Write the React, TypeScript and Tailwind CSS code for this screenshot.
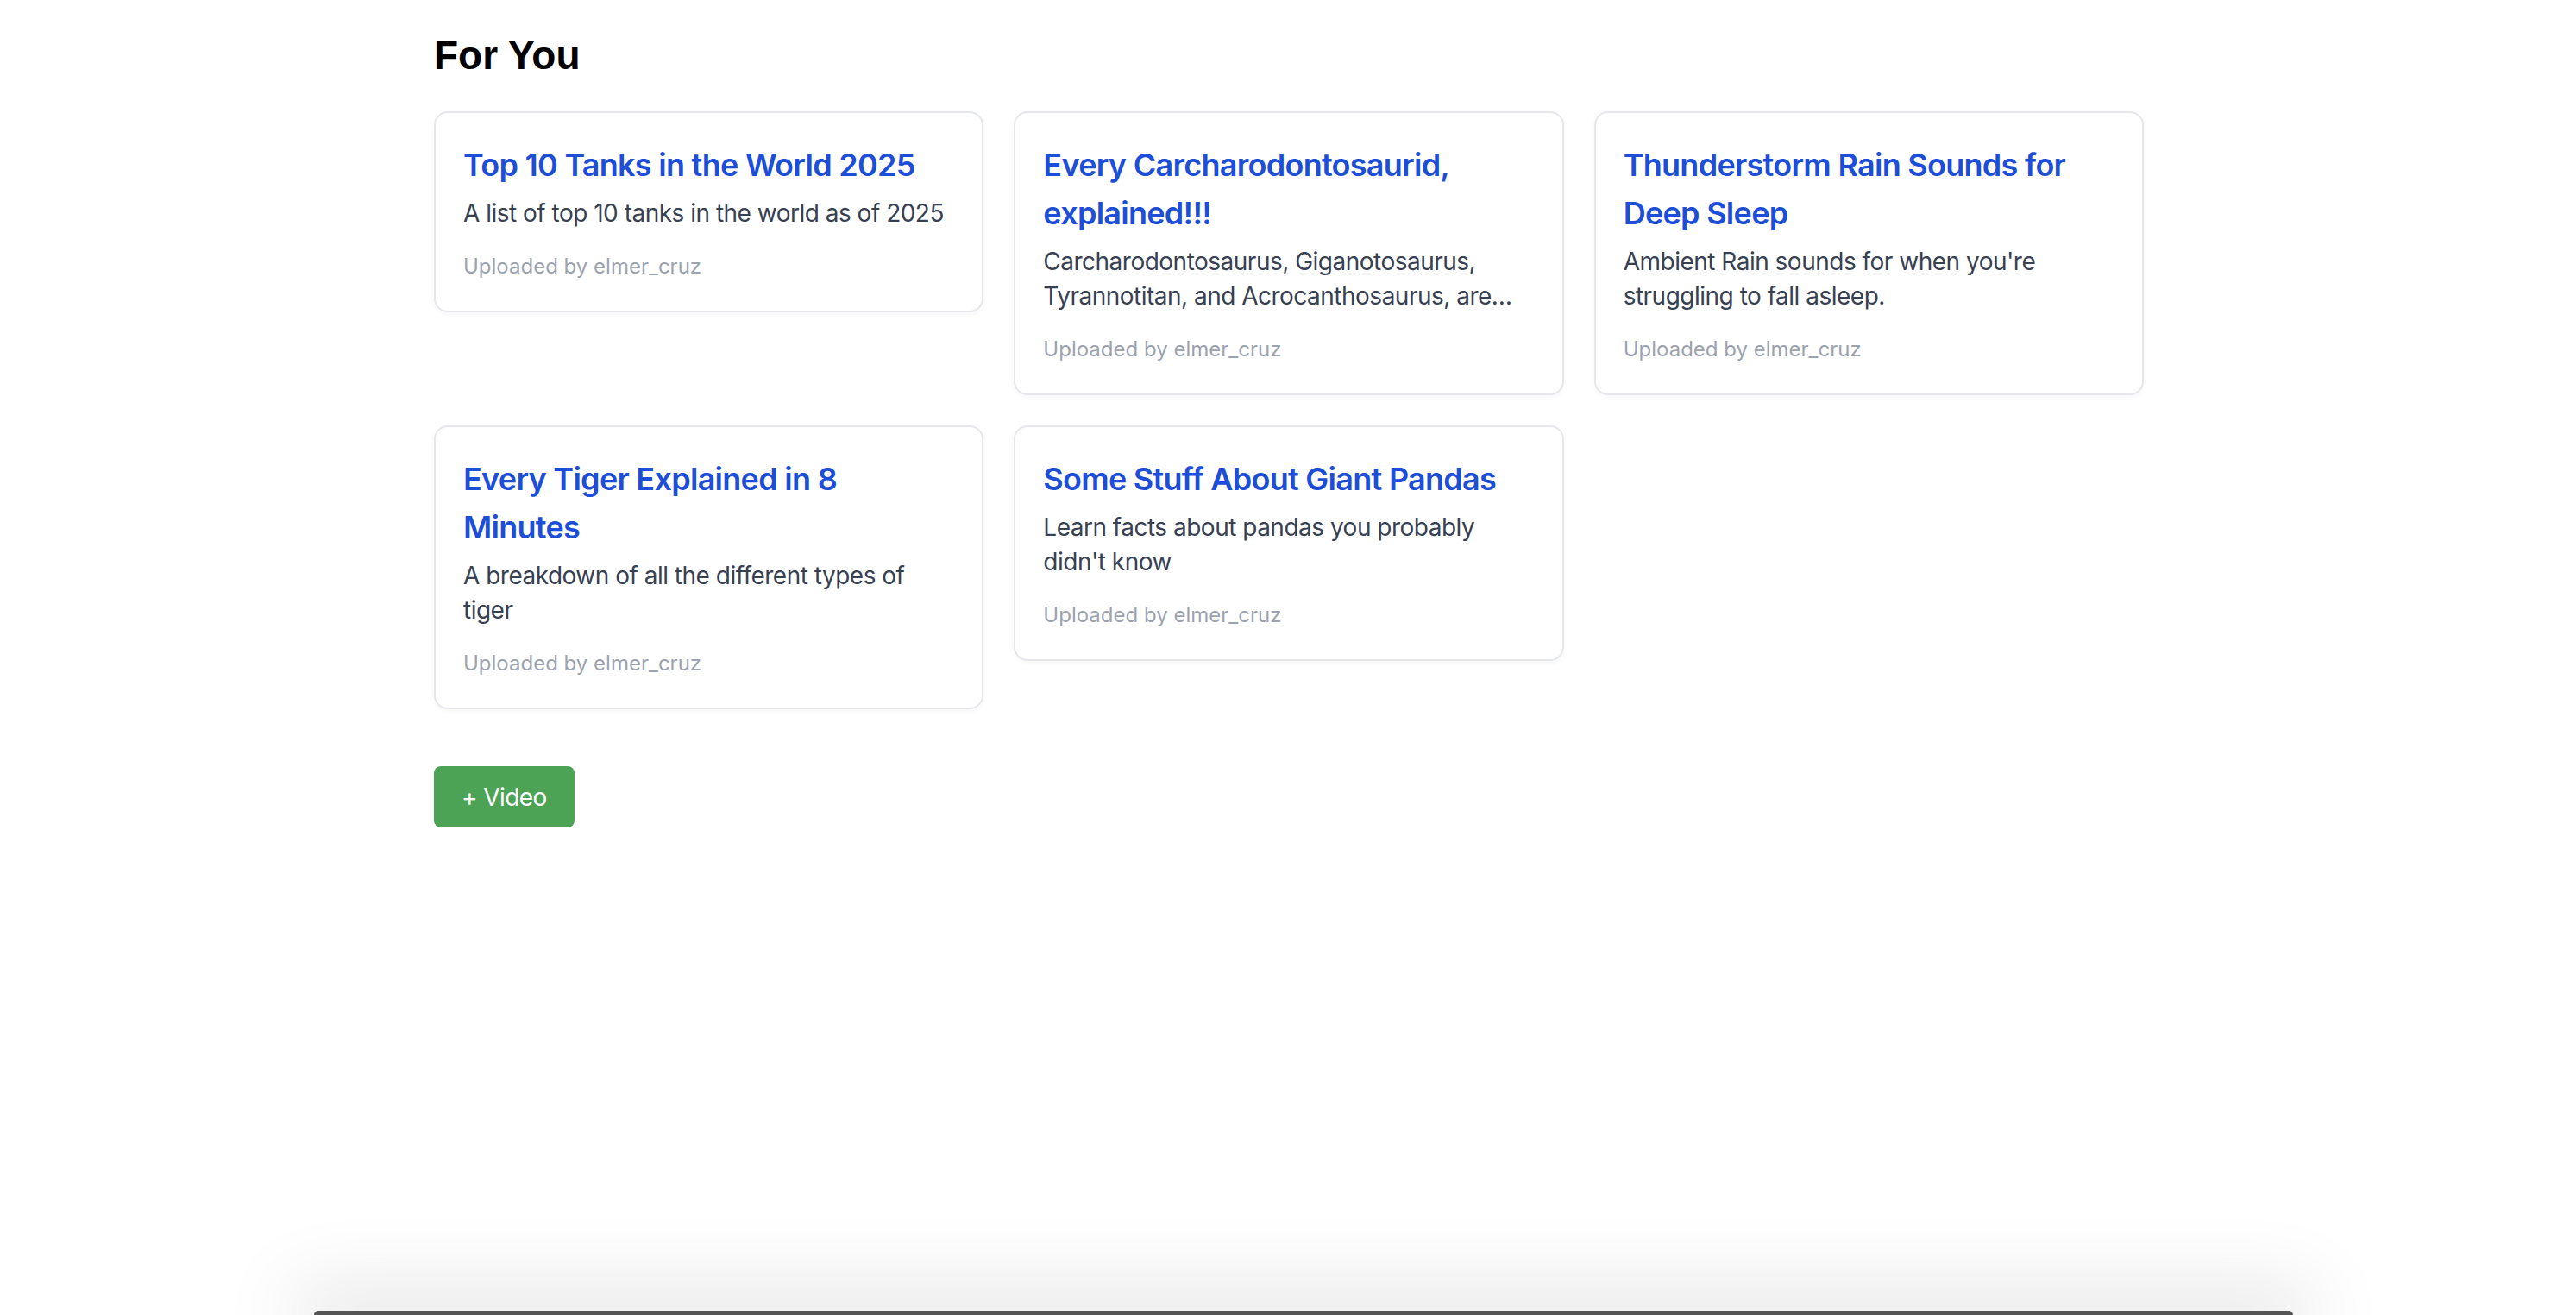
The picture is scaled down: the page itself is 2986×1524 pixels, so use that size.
const videos = [
  {
    id: "1",
    title: "Top 10 Tanks in the World 2025",
    description: "A list of top 10 tanks in the world as of 2025",
    uploader: "elmer_cruz",
  },
  {
    id: "2",
    title: "Every Carcharodontosaurid, explained!!!",
    description:
      "Carcharodontosaurus, Giganotosaurus, Tyrannotitan, and Acrocanthosaurus, are some of the largest meat-eating dinosaurs that ever lived.",
    uploader: "elmer_cruz",
  },
  {
    id: "3",
    title: "Thunderstorm Rain Sounds for Deep Sleep",
    description: "Ambient Rain sounds for when you're struggling to fall asleep.",
    uploader: "elmer_cruz",
  },
  {
    id: "4",
    title: "Every Tiger Explained in 8 Minutes",
    description: "A breakdown of all the different types of tiger",
    uploader: "elmer_cruz",
  },
  {
    id: "5",
    title: "Some Stuff About Giant Pandas",
    description: "Learn facts about pandas you probably didn't know",
    uploader: "elmer_cruz",
  },
];

interface IVideo {
  id: string;
  title: string;
  description: string;
  uploader: string;
}

const VideoCard = ({ title, description, uploader }: IVideo) => {
  return (
    <div className="border-2 border-[#e5e7eb] rounded-[16px] px-8 pt-8 pb-[35px] bg-white shadow-[0_2px_6px_rgba(0,0,0,0.04)]">
      <h3 className="text-[36px] leading-[56px] font-semibold tracking-[-0.02em] text-[#1d4ed8]">
        {title}
      </h3>
      <p className="mt-2 text-[28px] leading-[40px] tracking-[-0.018em] text-[#374151] line-clamp-2">
        {description}
      </p>
      <p className="mt-[26px] text-[24px] leading-[32px] text-[#9ca3af]">
        Uploaded by {uploader}
      </p>
    </div>
  );
};

const App = () => {
  return (
    <div className="relative min-h-screen bg-white font-['Inter',sans-serif]">
      <div className="w-[1982px] ml-[503px] pt-[41px]">
        <h2 className="font-['Liberation_Sans',Arial,sans-serif] font-bold text-[46px] leading-[46px] text-black mb-[42px]">
          For You
        </h2>

        <div className="grid grid-cols-3 gap-[35px] items-start">
          {videos.map((el) => (
            <VideoCard {...el} key={el.id} />
          ))}
        </div>

        <button className="mt-[66px] h-[71px] px-8 flex items-center rounded-[8px] bg-[#4ca355] text-white text-[28px] tracking-[-0.02em]">
          + Video
        </button>
      </div>

      <div className="fixed bottom-0 left-[364px] w-[2294px] h-[5px] bg-[#555555] rounded-t-[10px] shadow-[0_0_90px_24px_rgba(0,0,0,0.13)]" />
    </div>
  );
};

export default App;
